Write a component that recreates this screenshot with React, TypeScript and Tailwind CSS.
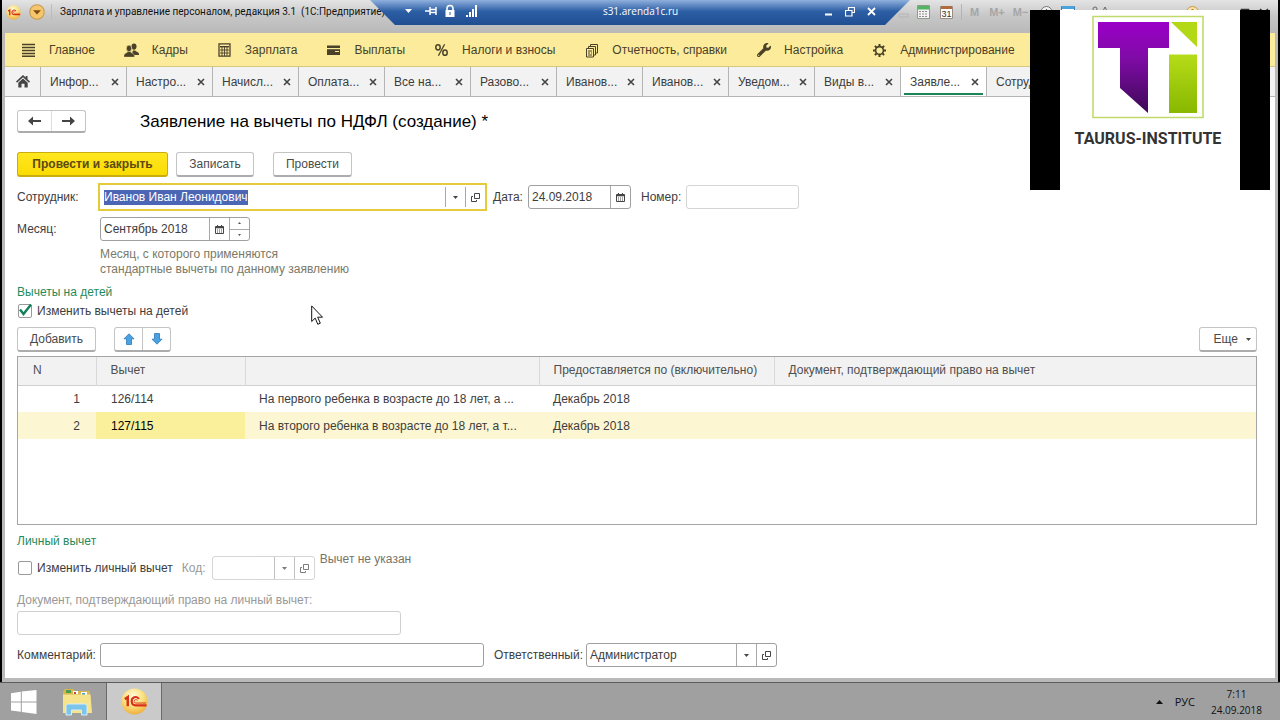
import { useEffect, useRef, type ReactNode } from "react";
import { FaWrench } from "react-icons/fa";

type Tab = { title: string; active?: boolean };

const tabs: Tab[] = [
  { title: "Инфор..." },
  { title: "Настро..." },
  { title: "Начисл..." },
  { title: "Оплата..." },
  { title: "Все на..." },
  { title: "Разово..." },
  { title: "Иванов..." },
  { title: "Иванов..." },
  { title: "Уведом..." },
  { title: "Виды в..." },
  { title: "Заявле...", active: true },
  { title: "Сотруд..." },
];

const rows = [
  {
    n: 1,
    code: "126/114",
    name: "На первого ребенка в возрасте до 18 лет, а ...",
    until: "Декабрь 2018",
  },
  {
    n: 2,
    code: "127/115",
    name: "На второго ребенка в возрасте до 18 лет, а т...",
    until: "Декабрь 2018",
    selected: true,
  },
];

function MenuLinesIcon() {
  return (
    <svg width="15" height="14" viewBox="0 0 15 14" aria-hidden="true">
      <path
        d="M1 1.500h13M1 4.500h13M1 7.500h13M1 10.500h13M1 13.300h13"
        stroke="#4a4128"
        strokeWidth="1.500"
      />
    </svg>
  );
}

function PeopleIcon() {
  return (
    <svg width="15" height="15" viewBox="0 0 15 15" fill="#4a4128" aria-hidden="true">
      <ellipse cx="10" cy="3.600" rx="2.500" ry="3.100" />
      <path d="M9 7.400h2.200c.2 1 3.500 1.300 3.800 3.300v1.300H10.300c-.5-1.500-1.800-2-2.100-2.600z" />
      <ellipse cx="5" cy="5.400" rx="2.700" ry="3.300" stroke="#fbeb9a" strokeWidth=".7" />
      <path
        d="M3.800 8.500h2.400c.3 1.500 4 1.600 4.200 4v1.500H0v-1.500c.2-2.400 3.500-2.500 3.800-4z"
        stroke="#fbeb9a"
        strokeWidth=".3"
      />
    </svg>
  );
}

function CalculatorIcon() {
  return (
    <svg width="15" height="14" viewBox="0 0 15 14" fill="none" aria-hidden="true">
      <path d="M2 .8h11v12.400H2z" stroke="#4a4128" strokeWidth="1.300" />
      <path d="M3 3.700h9" stroke="#4a4128" strokeWidth="1.400" />
      <path d="M3 7h9M3 10h9M5 4v9M7.500 4v9M10 4v9" stroke="#4a4128" strokeWidth=".9" />
    </svg>
  );
}

function CardIcon() {
  return (
    <svg width="15" height="14" viewBox="0 0 15 14" fill="#4a4128" aria-hidden="true">
      <rect x="1" y="2.500" width="13" height="2.500" />
      <path d="M1 6.200h13V12H1z" />
      <path d="M9 8.500h4" stroke="#fbeb9a" strokeWidth="1" />
    </svg>
  );
}

function PercentIcon() {
  return (
    <svg width="15" height="14" viewBox="0 0 15 14" fill="none" stroke="#4a4128" aria-hidden="true">
      <ellipse cx="4" cy="4.300" rx="2.200" ry="2.600" strokeWidth="1.500" />
      <ellipse cx="11" cy="9.700" rx="2.200" ry="2.600" strokeWidth="1.500" />
      <path d="M10.600 1.300 4.400 12.700" strokeWidth="1.300" />
    </svg>
  );
}

function ReportsIcon() {
  return (
    <svg width="15" height="15" viewBox="0 0 15 15" fill="none" stroke="#4a4128" aria-hidden="true">
      <path d="M2.500 5.500h7v8.500h-7z" />
      <path d="M4.500 5.500V3.500h7V12h-2M6.500 3.500v-2h7V10h-2" />
      <path d="M4 8h4M4 10h2M4 12h4M7 10h1" />
    </svg>
  );
}

function GearIcon() {
  return (
    <svg width="15" height="15" viewBox="0 0 15 15" fill="none" stroke="#4a4128" aria-hidden="true">
      <circle cx="7.500" cy="7.500" r="3.900" strokeWidth="1.600" />
      <path
        d="M7.500 1v2.500M7.500 11.500V14M1 7.500h2.500M11.500 7.500H14M2.900 2.900l1.800 1.800M10.300 10.300l1.800 1.800M12.100 2.900l-1.800 1.800M4.700 10.300l-1.800 1.800"
        strokeWidth="2"
      />
    </svg>
  );
}

const menu: { title: string; icon: ReactNode }[] = [
  { title: "Главное", icon: <MenuLinesIcon /> },
  { title: "Кадры", icon: <PeopleIcon /> },
  { title: "Зарплата", icon: <CalculatorIcon /> },
  { title: "Выплаты", icon: <CardIcon /> },
  { title: "Налоги и взносы", icon: <PercentIcon /> },
  { title: "Отчетность, справки", icon: <ReportsIcon /> },
  { title: "Настройка", icon: <FaWrench size={14} color="#4a4128" aria-hidden="true" /> },
  { title: "Администрирование", icon: <GearIcon /> },
];

function OneCLogo({ size }: { size: number }) {
  return (
    <svg width={size} height={size} viewBox="0 0 28 28" fill="none" aria-hidden="true">
      <defs>
        <radialGradient id={"oneC" + size} cx="45%" cy="30%" r="70%">
          <stop offset="0" stopColor="#fffbe0" />
          <stop offset=".55" stopColor="#fbe07c" />
          <stop offset="1" stopColor="#eeb040" />
        </radialGradient>
      </defs>
      <circle cx="14" cy="14" r="13.500" fill={"url(#oneC" + size + ")"} />
      <path d="M4 11.500 7 9.500v9.500" stroke="#d8311b" strokeWidth="2.600" />
      <path
        d="M18.500 11.500c-1-2-3-2.500-4.800-1.800-4 1.600-3.300 8.300 1.300 8.300h11.500"
        stroke="#d8311b"
        strokeWidth="2.200"
      />
      <path d="M17 13c-1-1.700-3.500-1-3.300 1 .1 1 .8 1.600 1.800 1.600h10.500" stroke="#d8311b" strokeWidth="1" />
    </svg>
  );
}

function CaretDown() {
  return (
    <svg width="5" height="3" viewBox="0 0 5 3" fill="currentColor" aria-hidden="true">
      <path d="M0 0h5L2.500 3z" />
    </svg>
  );
}

function OpenIcon() {
  return (
    <svg width="9" height="9" viewBox="0 0 9 9" fill="none" stroke="currentColor" aria-hidden="true">
      <path d="M3.500.5h5v5h-5z" />
      <path d="M2 3.500H.5v5h5V7" />
    </svg>
  );
}

function CalendarIcon() {
  return (
    <svg width="9" height="9" viewBox="0 0 9 9" fill="none" stroke="currentColor" aria-hidden="true">
      <path d="M.5 1.500h8v7h-8z" />
      <path d="M.5 2.500h8" strokeWidth="1.600" />
      <path d="M2.500 0v2M6.500 0v2" />
      <path d="M2 5h1M4 5h1M6 5h1M2 7h1M4 7h1M6 7h1" />
    </svg>
  );
}

function CloseIcon() {
  return (
    <svg width="8" height="8" viewBox="0 0 8 8" fill="none" stroke="#444" aria-hidden="true">
      <path d="M1 1l6 6M7 1 1 7" strokeWidth="1.600" />
    </svg>
  );
}

function FieldButton({ label, children }: { label: string; children: ReactNode }) {
  return (
    <button
      type="button"
      aria-label={label}
      className="flex w-5 shrink-0 items-center justify-center self-stretch border-l border-[#a8a8a8] text-[#444]"
    >
      {children}
    </button>
  );
}

function PushButton({ className, children }: { className: string; children: ReactNode }) {
  return (
    <button
      type="button"
      className={
        "h-[25px] rounded-[3px] border border-b-2 border-[#c4c4c4] border-b-[#acacac] bg-white text-[#4a4a4a] " +
        className
      }
    >
      {children}
    </button>
  );
}

function TitleBar() {
  return (
    <header className="flex h-[33px] items-start bg-linear-to-b from-[#e4e4e4] via-[#c6c6c6] to-[#b9b9b9] pt-1">
      <div className="flex items-center pl-1">
        <OneCLogo size={15} />
        <svg className="ml-2" width="16" height="16" viewBox="0 0 15 15" aria-hidden="true">
          <circle cx="7.500" cy="7.500" r="6.800" fill="#f5c66b" stroke="#c79a4d" />
          <path d="M3.800 5.800h7.400l-3.700 4z" fill="#7c4a12" />
        </svg>
        <span className="ml-1.5 h-4 w-px bg-[#bcbcbc]" />
      </div>
      <h1 className="ml-2 whitespace-pre font-['Roboto',sans-serif] text-[10px] leading-4 text-[#111]">
        Зарплата и управление персоналом, редакция 3.1  (1С:Предприятие)
      </h1>
      <div className="ml-auto flex h-4 w-[380px] items-center text-[11px] font-bold text-[#a5a5a5]">
        <svg width="11" height="14" viewBox="0 0 11 14" fill="none" stroke="#b5b5b5" aria-hidden="true">
          <path d="M1 9h9v3H1z" />
        </svg>
        <svg className="ml-2" width="13" height="14" viewBox="0 0 13 14" aria-hidden="true">
          <path d="M.5.5h12v13H.5z" fill="#f4f4f4" stroke="#8d9a8d" />
          <path d="M1 1h11v3.500H1z" fill="#54b462" />
          <path d="M2 6.500h9M2 9h9M2 11.500h9" stroke="#8b8b8b" strokeDasharray="2 1" />
        </svg>
        <svg className="ml-[10px]" width="13" height="14" viewBox="0 0 13 14" aria-hidden="true">
          <path d="M.5 1.500h12v12H.5z" fill="#fdfdfd" stroke="#9a8c80" />
          <path d="M1 1h11v3H1z" fill="#b06a3c" />
          <text x="6.500" y="12" textAnchor="middle" fontSize="9" fontWeight="400" fill="#333">
            31
          </text>
        </svg>
        <span className="ml-2 h-4 w-px bg-[#b4b4b4]" />
        <span className="ml-2">M</span>
        <span className="ml-[10px]">M+</span>
        <span className="ml-2">M−</span>
        <svg className="ml-3" width="13" height="14" viewBox="0 0 13 14" fill="none" aria-hidden="true">
          <circle cx="6.500" cy="7" r="5.500" fill="#eee" stroke="#777" />
          <path d="M6.500 4v3h2" stroke="#555" />
        </svg>
        <svg className="ml-2" width="14" height="14" viewBox="0 0 14 14" aria-hidden="true">
          <path d="M.5 1.500h13v11H.5z" fill="#fff" stroke="#3f83b5" />
          <path d="M1 1h12v3H1z" fill="#4aa3dc" />
        </svg>
        <svg className="ml-4" width="18" height="14" viewBox="0 0 18 14" fill="none" stroke="#666" aria-hidden="true">
          <circle cx="4" cy="4" r="2" />
          <path d="M11 8l3-6 3 6" />
        </svg>
        <svg className="ml-[76px]" width="15" height="14" viewBox="0 0 15 14" aria-hidden="true">
          <circle cx="7.500" cy="7.500" r="6" fill="#f3e2b2" stroke="#d79a2c" />
          <path d="M7.500 4v6" stroke="#c07c12" strokeWidth="2" />
        </svg>
        <svg className="ml-auto mr-2" width="30" height="9" viewBox="0 0 30 9" fill="none" stroke="#333" aria-hidden="true">
          <path d="M1.500 1.500h7v6h-7zM20 1l8 7M28 1l-8 7" strokeWidth="1.600" />
        </svg>
      </div>
    </header>
  );
}

// remote session bar, hangs over the window's own title
function ConnectionBar() {
  return (
    <div className="absolute left-1/2 top-0 flex h-[25px] w-[540px] -translate-x-1/2 items-center justify-between bg-linear-to-b from-[#8fb0dc] via-[#2d5fa5] via-45% to-[#1f4d92] pb-[3px] pl-[35px] pr-[34px] text-white [clip-path:polygon(0_0,100%_0,calc(100%-25px)_100%,25px_100%)]">
      <svg width="72" height="14" viewBox="0 0 72 14" fill="none" aria-hidden="true">
        <path d="M0 5h7l-3.500 4z" fill="#fff" />
        <path d="M20 7h5M25 3v8M25.500 5.500h5M25.500 8.500h5M31 3v8" stroke="#fff" strokeWidth="1.500" />
        <path d="M40.500 6h9v7h-9z" fill="#fff" />
        <path d="M42 7V4.500a3 3 0 0 1 6 0V7" stroke="#fff" strokeWidth="1.600" />
        <path d="M45 8v3" stroke="#2d5fa5" />
        <path d="M62 13v-2M65 13V8M68 13V5M71 13V1" stroke="#fff" strokeWidth="2" />
      </svg>
      <span className="pr-5 font-['Open_Sans',sans-serif] text-[10px] leading-4">s31.arenda1c.ru</span>
      <div className="flex items-center gap-3">
        <button type="button" aria-label="Свернуть">
          <svg width="9" height="11" viewBox="0 0 9 11" aria-hidden="true">
            <path d="M1 8.500h7" stroke="#fff" strokeWidth="2" />
          </svg>
        </button>
        <button type="button" aria-label="Восстановить">
          <svg width="10" height="11" viewBox="0 0 10 11" fill="none" stroke="#fff" aria-hidden="true">
            <path d="M3.500 4V1.500h6v5H7M.5 4.500H7V10H.5z" strokeWidth="1.200" />
          </svg>
        </button>
        <button type="button" aria-label="Закрыть">
          <svg width="9" height="11" viewBox="0 0 9 11" fill="none" stroke="#fff" aria-hidden="true">
            <path d="M1 2l7 7M8 2 1 9" strokeWidth="1.800" />
          </svg>
        </button>
      </div>
    </div>
  );
}

function Watermark() {
  return (
    <div className="absolute right-[10px] top-[10px] flex h-[180px] w-[240px] justify-center bg-black">
      <div className="flex w-[180px] flex-col items-center bg-white pr-1 pt-[5px]">
        <svg width="112" height="104" viewBox="0 0 112 104" aria-hidden="true">
          <defs>
            <linearGradient id="taurusT" x1="0" y1="0" x2="0" y2="1">
              <stop offset="0" stopColor="#9b00c8" />
              <stop offset=".4" stopColor="#7f0ba6" />
              <stop offset="1" stopColor="#3d0a55" />
            </linearGradient>
            <linearGradient id="taurusI" x1="0" y1="0" x2="0" y2="1">
              <stop offset="0" stopColor="#b6dc18" />
              <stop offset="1" stopColor="#88b800" />
            </linearGradient>
          </defs>
          <path d="M1 1.500h110v101H1z" fill="none" stroke="#bfd96a" strokeWidth="1.500" />
          <path d="M6 7h71v26H56v65L28 73V33H6z" fill="url(#taurusT)" />
          <path d="M79 7h26v25z" fill="#b3d916" />
          <path d="M77 39.500h28V98H77z" fill="url(#taurusI)" />
        </svg>
        <span className="mt-1 whitespace-nowrap font-['Roboto',sans-serif] text-[16px] font-bold leading-8 text-[#333]">
          TAURUS-INSTITUTE
        </span>
      </div>
    </div>
  );
}

function Taskbar() {
  return (
    <footer className="flex h-[38px] shrink-0 items-stretch border-t border-[#5c5c5c] bg-[#a0a0a1] font-['Open_Sans',sans-serif] text-[11px] text-[#111]">
      <button type="button" aria-label="Пуск" className="flex w-12 items-center justify-center">
        <svg width="26" height="24" viewBox="0 0 26 24" fill="#fff" aria-hidden="true">
          <path d="M0 3.200 9.800 1.800v9.700H0zM10.800 1.600 25.500 0v11.500H10.800zM0 12.500h9.800v9.200L0 20.500zM10.800 12.500h14.700V24l-14.700-2z" />
        </svg>
      </button>
      <button type="button" aria-label="Проводник" className="flex w-[58px] items-center justify-center">
        <svg width="30" height="28" viewBox="0 0 30 28" aria-hidden="true">
          <path d="M1 3.500 3 1h8l2 2h14l1 1.500V24H1z" fill="#d9b64e" />
          <path d="M4 2h5v3H4z" fill="#4aa04a" />
          <path d="M11 3h5v3h-5z" fill="#fff" />
          <path d="M12 4h2v2h-2z" fill="#d0463a" />
          <path d="M19 4h6v3h-6z" fill="#fff" />
          <path d="M20 5h3v2h-3z" fill="#4f9ad8" />
          <path d="M1 6.500h27.500L30 25H1z" fill="#f6e48d" />
          <path
            d="M4 27v-8.500c0-1.500 1-2.500 2.500-2.500h16c1.500 0 2.500 1 2.500 2.500V27h-5.500v-5h-10v5z"
            fill="#7cc4ea"
            stroke="#d6effb"
          />
        </svg>
      </button>
      <button
        type="button"
        aria-label="1С:Предприятие"
        className="flex w-14 items-center justify-center border-x border-[#6a6a6a] bg-[#cacaca]"
      >
        <OneCLogo size={27} />
      </button>
      <div className="ml-auto flex items-center pr-[18px]">
        <svg width="7" height="4" viewBox="0 0 7 4" aria-hidden="true">
          <path d="M0 4h7L3.500 0z" fill="#111" />
        </svg>
        <span className="ml-3">РУС</span>
        <div className="ml-4 text-center text-[10px] leading-4">
          <div>7:11</div>
          <div>24.09.2018</div>
        </div>
      </div>
    </footer>
  );
}

function DeductionsTable() {
  return (
    <div className="min-h-[169px] border border-[#a5a5a5]">
      <table className="w-full table-fixed border-collapse text-left">
        <colgroup>
          <col className="w-[78px]" />
          <col className="w-[149px]" />
          <col className="w-[294px]" />
          <col className="w-[235px]" />
          <col />
        </colgroup>
        <thead>
          <tr className="h-7 border-b border-[#d0d0d0] bg-[#f2f2f2] text-[#4f4f4f]">
            <th className="border-r border-[#d9d9d9] pl-[15px] font-normal">N</th>
            <th className="border-r border-[#d9d9d9] pl-[14px] font-normal">Вычет</th>
            <th aria-label="Описание" className="border-r border-[#d9d9d9]" />
            <th className="whitespace-nowrap border-r border-[#d9d9d9] pl-[14px] font-normal">
              Предоставляется по (включительно)
            </th>
            <th className="pl-[14px] font-normal">Документ, подтверждающий право на вычет</th>
          </tr>
        </thead>
        <tbody>
          {rows.map((row) => (
            <tr key={row.n} className={row.selected ? "h-[27px] bg-[#fcf6d2]" : "h-[27px]"}>
              <td className="pr-4 pt-px text-right">{row.n}</td>
              <td
                className={
                  row.selected ? "bg-[#faf09c] pl-[15px] pt-px text-black" : "pl-[15px] pt-px"
                }
              >
                {row.code}
              </td>
              <td className="whitespace-nowrap pl-[14px] pt-px">{row.name}</td>
              <td className="pl-[14px] pt-px">{row.until}</td>
              <td />
            </tr>
          ))}
        </tbody>
      </table>
    </div>
  );
}

export default function App() {
  const employeeRef = useRef<HTMLInputElement>(null);

  useEffect(() => {
    employeeRef.current?.focus();
    employeeRef.current?.select();
  }, []);

  return (
    <div className="relative flex min-h-screen flex-col bg-[#a0a0a1] font-['Liberation_Sans',Arial,sans-serif] text-[12px] leading-[15px] text-[#3d3d3d]">
      <div className="flex flex-1 flex-col border-x-2 border-black bg-[#b9b9b9]">
        <TitleBar />
        <div className="mx-[3px] mb-1 flex flex-1 flex-col bg-white">
          <nav className="flex h-[34px] items-center gap-[29px] border-b border-[#d6c87c] bg-[#fbeb9a] pl-4 pt-px text-[#4a4128]">
            {menu.map((item) => (
              <a key={item.title} href="#" className="flex items-center gap-[13px] whitespace-nowrap">
                <span className="flex w-[15px] justify-center">{item.icon}</span>
                {item.title}
              </a>
            ))}
          </nav>

          <div className="flex h-[30px] overflow-hidden border-b border-[#b5b5b5] bg-[#f2f2f2]">
            <button
              type="button"
              aria-label="Начальная страница"
              className="flex w-9 shrink-0 items-center justify-center border-r border-[#b5b5b5]"
            >
              <svg width="14" height="13" viewBox="0 0 14 13" fill="#444" aria-hidden="true">
                <path d="M7 0 0 6.500 1 7.700 7 2.300l6 5.400 1-1.200-2.500-2.300V1H9.700v1.500z" />
                <path d="M2.300 7.700 7 3.500l4.700 4.200V12.500H8.500V8.700h-3v3.800H2.300z" />
              </svg>
            </button>
            {tabs.map((tab, i) => (
              <div
                key={i}
                className={
                  "flex w-[86px] shrink-0 border-r border-[#b5b5b5] px-[3px] " +
                  (tab.active ? "bg-white" : "")
                }
              >
                <div
                  className={
                    "mb-px flex flex-1 items-center justify-between border-b-2 pl-1.5 pr-1 pt-1 " +
                    (tab.active ? "border-[#1b8558]" : "border-transparent")
                  }
                >
                  <a href="#">{tab.title}</a>
                  <button type="button" aria-label={"Закрыть " + tab.title}>
                    <CloseIcon />
                  </button>
                </div>
              </div>
            ))}
          </div>

          <main className="flex flex-1 flex-col pb-2 pl-3 pr-[18px] pt-3">
            <div className="flex items-center">
              <div className="flex h-[23px] w-[69px] rounded-[3px] border border-b-2 border-[#c4c4c4] border-b-[#acacac]">
                <button type="button" aria-label="Назад" className="flex flex-1 items-center justify-center">
                  <svg width="13" height="10" viewBox="0 0 13 10" fill="#444" aria-hidden="true">
                    <path d="M0 5l5-4.500V4h8v2H5v3.500z" />
                  </svg>
                </button>
                <button
                  type="button"
                  aria-label="Вперед"
                  className="flex flex-1 items-center justify-center border-l border-[#dcdcdc]"
                >
                  <svg width="13" height="10" viewBox="0 0 13 10" fill="#444" aria-hidden="true">
                    <path d="M13 5L8 .5V4H0v2h8v3.500z" />
                  </svg>
                </button>
              </div>
              <h2 className="ml-[54px] pt-px text-[17px] leading-6 text-black">
                Заявление на вычеты по НДФЛ (создание) *
              </h2>
            </div>

            <div className="mt-[18px] flex">
              <button
                type="button"
                className="h-[25px] w-[151px] rounded-[3px] border border-b-2 border-[#c9ad10] bg-linear-to-b from-[#ffe71f] to-[#fadb00] font-bold text-[#5c4a10]"
              >
                Провести и закрыть
              </button>
              <PushButton className="ml-2 w-[78px]">Записать</PushButton>
              <PushButton className="ml-[19px] w-[79px]">Провести</PushButton>
            </div>

            <div className="mt-[6px] flex items-center">
              <label htmlFor="employee" className="w-[81px]">
                Сотрудник:
              </label>
              <div className="flex h-7 w-[389px] items-center border-2 border-[#e3cb3c] py-[2px]">
                <input
                  id="employee"
                  ref={employeeRef}
                  defaultValue="Иванов Иван Леонидович"
                  className="min-w-0 flex-1 pl-1 outline-none selection:bg-[#4a66b4] selection:text-white"
                />
                <FieldButton label="Выбрать сотрудника">
                  <CaretDown />
                </FieldButton>
                <FieldButton label="Открыть сотрудника">
                  <OpenIcon />
                </FieldButton>
              </div>
              <label htmlFor="date" className="ml-[6px] w-[35px]">
                Дата:
              </label>
              <div className="flex h-6 w-[103px] items-center rounded-[3px] border border-[#a0a0a0]">
                <input id="date" defaultValue="24.09.2018" className="min-w-0 flex-1 pl-[3px] outline-none" />
                <FieldButton label="Календарь">
                  <CalendarIcon />
                </FieldButton>
              </div>
              <label htmlFor="number" className="ml-[10px] w-[45px]">
                Номер:
              </label>
              <input id="number" className="h-6 w-[113px] rounded-[3px] border border-[#d4d4d4] px-1" />
            </div>

            <div className="mt-[6px] flex items-center">
              <label htmlFor="month" className="w-[83px]">
                Месяц:
              </label>
              <div className="flex h-6 w-[150px] items-center rounded-[3px] border border-[#a0a0a0]">
                <input id="month" defaultValue="Сентябрь 2018" className="min-w-0 flex-1 pl-[3px] outline-none" />
                <FieldButton label="Выбрать месяц">
                  <CalendarIcon />
                </FieldButton>
                <div className="flex w-5 flex-col self-stretch border-l border-[#a8a8a8] text-[#555]">
                  <button type="button" aria-label="Следующий месяц" className="flex flex-1 items-center justify-center">
                    <svg width="3" height="2" viewBox="0 0 3 2" fill="currentColor" aria-hidden="true">
                      <path d="M0 2h3L1.500 0z" />
                    </svg>
                  </button>
                  <button
                    type="button"
                    aria-label="Предыдущий месяц"
                    className="flex flex-1 items-center justify-center border-t border-[#a8a8a8]"
                  >
                    <svg width="3" height="2" viewBox="0 0 3 2" fill="currentColor" aria-hidden="true">
                      <path d="M0 0h3L1.500 2z" />
                    </svg>
                  </button>
                </div>
              </div>
            </div>

            <p className="ml-[83px] mt-[6px] text-[#7b7967]">
              Месяц, с которого применяются
              <br />
              стандартные вычеты по данному заявлению
            </p>

            <h3 className="mt-2 text-[#1f8a5b]">Вычеты на детей</h3>
            <label className="mt-[3px] flex items-center gap-1 self-start">
              <span className="relative flex">
                <input
                  type="checkbox"
                  defaultChecked
                  className="peer m-px size-[14px] appearance-none rounded-[2px] border border-[#999]"
                />
                <svg
                  className="pointer-events-none absolute inset-0 hidden peer-checked:block"
                  width="16"
                  height="16"
                  viewBox="0 0 16 16"
                  fill="none"
                  aria-hidden="true"
                >
                  <path d="M3 6.500 6.500 11 14 1.500" stroke="#12805a" strokeWidth="2.400" />
                </svg>
              </span>
              Изменить вычеты на детей
            </label>

            <div className="mb-1 mt-2 flex items-start">
              <PushButton className="w-[79px]">Добавить</PushButton>
              <div className="ml-[18px] flex h-[25px] w-[57px] rounded-[3px] border border-b-2 border-[#c4c4c4] border-b-[#acacac]">
                <button type="button" aria-label="Переместить вверх" className="flex flex-1 items-center justify-center">
                  <svg width="12" height="12" viewBox="0 0 12 12" fill="#4aa3e0" stroke="#2b78b8" aria-hidden="true">
                    <path d="M6 .8l5 5H8.500v5.700h-5V5.800H1z" strokeWidth=".8" />
                  </svg>
                </button>
                <button
                  type="button"
                  aria-label="Переместить вниз"
                  className="flex flex-1 items-center justify-center border-l border-[#c4c4c4]"
                >
                  <svg width="12" height="12" viewBox="0 0 12 12" fill="#4aa3e0" stroke="#2b78b8" aria-hidden="true">
                    <path d="M6 11.200l5-5H8.500V.5h-5v5.700H1z" strokeWidth=".8" />
                  </svg>
                </button>
              </div>
              <PushButton className="ml-auto flex w-[58px] items-center justify-end gap-2 pr-[5px]">
                Еще
                <CaretDown />
              </PushButton>
            </div>

            <DeductionsTable />

            <h3 className="mt-[9px] text-[#1f8a5b]">Личный вычет</h3>
            <div className="mt-[7px] flex items-center">
              <label className="flex items-center gap-1">
                <input
                  type="checkbox"
                  className="m-px size-[14px] appearance-none rounded-[2px] border border-[#999]"
                />
                Изменить личный вычет
              </label>
              <label htmlFor="code" className="ml-[9px] w-[30px] text-[#999]">
                Код:
              </label>
              <div className="flex h-6 w-[103px] items-center rounded-[3px] border border-[#c4c4c4] opacity-70">
                <input id="code" disabled className="min-w-0 flex-1 pl-[3px]" />
                <FieldButton label="Выбрать код">
                  <CaretDown />
                </FieldButton>
                <FieldButton label="Открыть код">
                  <OpenIcon />
                </FieldButton>
              </div>
              <span className="-mt-1 ml-[5px] self-start text-[#77756a]">Вычет не указан</span>
            </div>

            <label htmlFor="document" className="mt-[13px] text-[#999]">
              Документ, подтверждающий право на личный вычет:
            </label>
            <input
              id="document"
              disabled
              className="mt-[3px] h-6 w-[384px] rounded-[3px] border border-[#d0d0d0] px-1"
            />

            <div className="mt-2 flex items-center">
              <label htmlFor="comment" className="w-[83px]">
                Комментарий:
              </label>
              <input id="comment" className="h-6 w-[384px] rounded-[3px] border border-[#a0a0a0] px-1" />
              <label htmlFor="responsible" className="ml-[10px] w-[92px]">
                Ответственный:
              </label>
              <div className="flex h-6 w-[191px] items-center rounded-[3px] border border-[#a0a0a0]">
                <input
                  id="responsible"
                  defaultValue="Администратор"
                  className="min-w-0 flex-1 pl-[3px] outline-none"
                />
                <FieldButton label="Выбрать ответственного">
                  <CaretDown />
                </FieldButton>
                <FieldButton label="Открыть ответственного">
                  <OpenIcon />
                </FieldButton>
              </div>
            </div>
          </main>
        </div>
      </div>
      <Taskbar />

      <ConnectionBar />
      <Watermark />
      <svg
        className="pointer-events-none absolute left-[311px] top-[305px]"
        width="13"
        height="21"
        viewBox="0 0 13 21"
        aria-hidden="true"
      >
        <path
          d="M.700.900v15.600l3.500-3.400 2.600 6.200 2.500-1.100-2.600-6h4.800z"
          fill="#fff"
          stroke="#111"
        />
      </svg>
    </div>
  );
}
